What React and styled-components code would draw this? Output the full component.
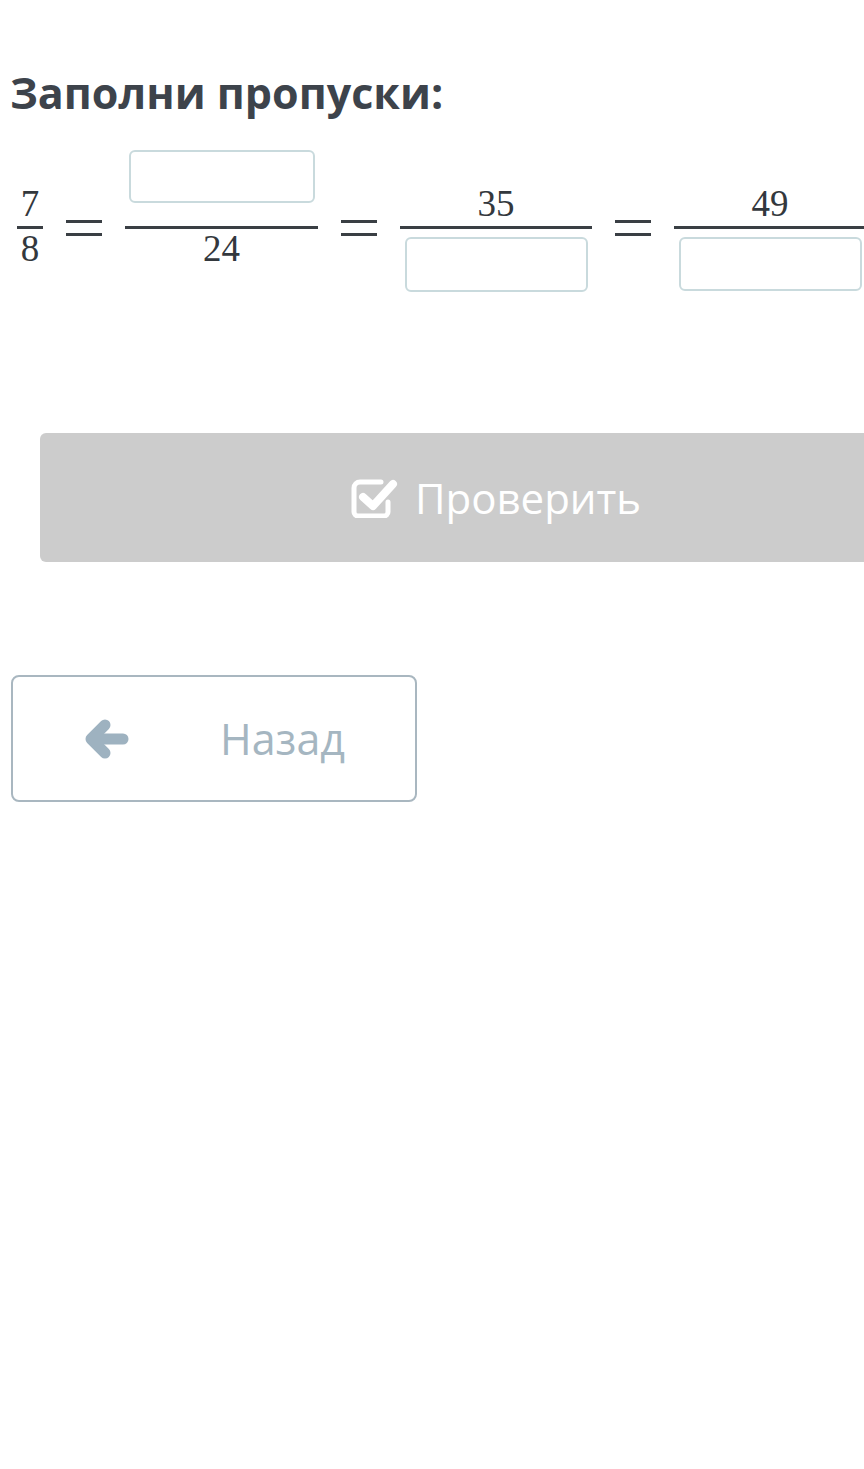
import React from 'react';
import styled, { createGlobalStyle } from 'styled-components';

const Global = createGlobalStyle`
  html, body {
    margin: 0;
    padding: 0;
    background: #fff;
    overflow-x: hidden;
  }
  body {
    font-family: "Open Sans", "Noto Sans", sans-serif;
  }
`;

const Page = styled.div`
  width: 1000px;
  padding: 65px 0 0 10px;
`;

const Title = styled.h1`
  margin: 0;
  font-size: 43px;
  line-height: 56px;
  font-weight: 700;
  color: #3d434b;
`;

const MathRow = styled.div`
  display: flex;
  align-items: center;
  gap: 23px;
  margin-top: 29px;
  padding-left: 7px;
  font-family: "Liberation Serif", "Times New Roman", serif;
  color: #33383d;
`;

const Frac = styled.div`
  display: flex;
  flex-direction: column;
  align-items: center;
  width: ${({ w }) => w}px;
`;

const Num = styled.div`
  height: 76px;
  display: flex;
  flex-direction: column;
  justify-content: flex-end;
  align-items: center;
`;

const Den = styled.div`
  height: 76px;
  display: flex;
  flex-direction: column;
  justify-content: flex-start;
  align-items: center;
`;

const Bar = styled.div`
  width: 100%;
  height: 3px;
  background: #3a3f44;
`;

const Digits = styled.span`
  font-size: 37px;
  line-height: 37px;
  display: block;
  margin: ${({ top }) => (top ? '0 0 4px' : '1px 0 0')};
`;

const Blank = styled.div`
  box-sizing: border-box;
  width: ${({ w }) => w}px;
  height: ${({ h }) => h}px;
  border: 2px solid #c9dadd;
  border-radius: 6px;
  background: #fff;
  margin: ${({ top }) => (top ? '0 0 23px' : '8px 0 0')};
`;

const Equals = styled.span`
  display: block;
  width: 36px;
  height: 10px;
  border-top: 3px solid #3a3f44;
  border-bottom: 3px solid #3a3f44;
`;

const CheckButton = styled.button`
  display: flex;
  align-items: center;
  justify-content: center;
  gap: 16px;
  width: 912px;
  height: 129px;
  margin: 128px 0 0 30px;
  border: none;
  border-radius: 6px;
  background: #cccccc;
  color: #fff;
  font-family: "Open Sans", "Noto Sans", sans-serif;
  font-size: 42px;
  padding: 0;
  cursor: default;
`;

const BackButton = styled.button`
  box-sizing: border-box;
  display: flex;
  align-items: center;
  width: 406px;
  height: 127px;
  margin: 113px 0 0 1px;
  padding: 0 0 0 72px;
  gap: 91px;
  border: 2.5px solid #a9b7c0;
  border-radius: 8px;
  background: #fff;
  color: #a5b6c1;
  font-family: "Open Sans", "Noto Sans", sans-serif;
  font-size: 43px;
  cursor: pointer;
`;

const CheckIcon = () => (
  <svg width="48" height="40" viewBox="0 0 48 40">
    <path
      d="M30 4 H9 a6 6 0 0 0 -6 6 v24 a4 4 0 0 0 4 4 h26 a4 4 0 0 0 4 -4 v-10"
      fill="none"
      stroke="#fff"
      strokeWidth="5"
      strokeLinecap="round"
    />
    <polyline
      points="12,19 22,28 42,6"
      fill="none"
      stroke="#fff"
      strokeWidth="8"
      strokeLinecap="round"
      strokeLinejoin="round"
    />
  </svg>
);

const ArrowIcon = () => (
  <svg width="44" height="42" viewBox="0 0 44 42">
    <polyline
      points="20,7 6,21 20,35"
      fill="none"
      stroke="#9eb2c0"
      strokeWidth="11"
      strokeLinecap="round"
      strokeLinejoin="round"
    />
    <line x1="8" y1="21" x2="38" y2="21" stroke="#9eb2c0" strokeWidth="11" strokeLinecap="round" />
  </svg>
);

export default function App() {
  return (
    <>
      <Global />
      <Page>
        <Title>Заполни пропуски:</Title>

        <MathRow>
          <Frac w={26}>
            <Num><Digits top>7</Digits></Num>
            <Bar />
            <Den><Digits>8</Digits></Den>
          </Frac>
          <Equals />
          <Frac w={193}>
            <Num><Blank top w={186} h={53} /></Num>
            <Bar />
            <Den><Digits>24</Digits></Den>
          </Frac>
          <Equals />
          <Frac w={192}>
            <Num><Digits top>35</Digits></Num>
            <Bar />
            <Den><Blank w={183} h={55} /></Den>
          </Frac>
          <Equals />
          <Frac w={192}>
            <Num><Digits top>49</Digits></Num>
            <Bar />
            <Den><Blank w={183} h={54} /></Den>
          </Frac>
        </MathRow>

        <CheckButton type="button">
          <CheckIcon />
          <span>Проверить</span>
        </CheckButton>

        <BackButton type="button">
          <ArrowIcon />
          <span>Назад</span>
        </BackButton>
      </Page>
    </>
  );
}
